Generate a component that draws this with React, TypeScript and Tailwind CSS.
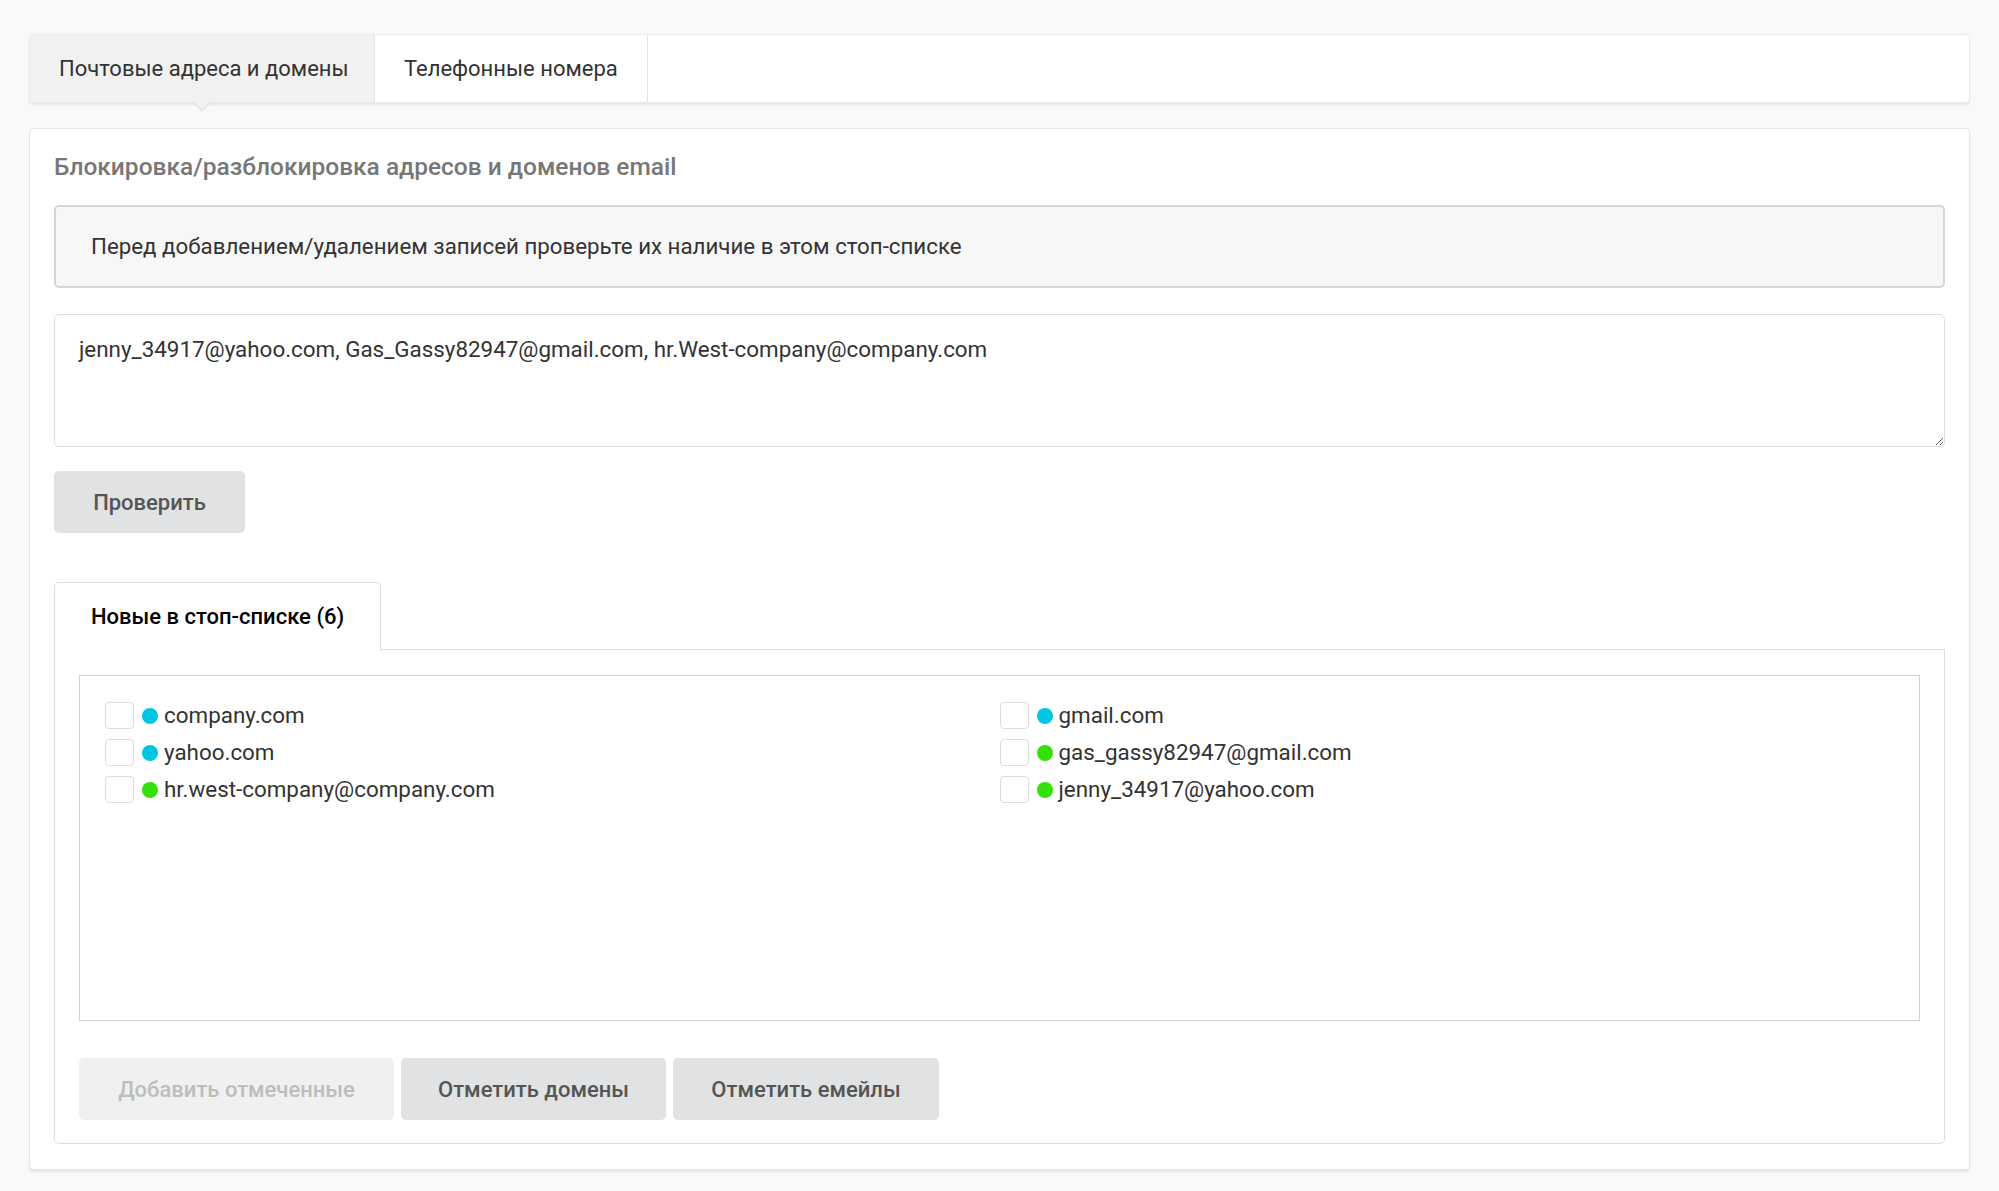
import { useState } from 'react';

type Item = { label: string; kind: 'domain' | 'email' };

const left: Item[] = [
  { label: 'company.com', kind: 'domain' },
  { label: 'yahoo.com', kind: 'domain' },
  { label: 'hr.west-company@company.com', kind: 'email' },
];

const right: Item[] = [
  { label: 'gmail.com', kind: 'domain' },
  { label: 'gas_gassy82947@gmail.com', kind: 'email' },
  { label: 'jenny_34917@yahoo.com', kind: 'email' },
];

const Row = ({ item }: { item: Item }) => (
  <label className="flex items-center h-[37px]">
    <span className="w-[29px] h-[27px] border border-[#dcdcdc] rounded-[4px] bg-white" />
    <span
      className={
        item.kind === 'domain'
          ? 'ml-[8px] w-[16px] h-[16px] rounded-full bg-[#00c6e4]'
          : 'ml-[8px] w-[16px] h-[16px] rounded-full bg-[#33e00a]'
      }
    />
    <span className="ml-[6px] text-[#333]">{item.label}</span>
  </label>
);

export default function App() {
  const [emails, setEmails] = useState(
    'jenny_34917@yahoo.com, Gas_Gassy82947@gmail.com, hr.West-company@company.com'
  );

  return (
    <div
      className="min-h-[1191px] bg-[#f9f9f9] px-[29px] pt-[34px] text-[22px] text-[#333]"
      style={{ fontFamily: 'Roboto, "Noto Sans", sans-serif' }}
    >
      {/* top tabs */}
      <div className="flex h-[69px] bg-white rounded-[4px] border border-[#ebebeb] shadow-[0_2px_2px_rgba(0,0,0,0.08)]">
        <div className="relative flex items-center w-[345px] bg-[#f1f1f1] rounded-l-[4px] border-r border-[#e4e4e4] pl-[29px]">
          Почтовые адреса и домены
          <span className="absolute left-[166px] -bottom-[7px] w-[12px] h-[12px] rotate-45 bg-[#f1f1f1] border-r border-b border-[#e0e0e0]" />
        </div>
        <div className="flex items-center w-[273px] border-r border-[#e4e4e4] pl-[29px]">Телефонные номера</div>
      </div>

      {/* main card */}
      <div className="mt-[25px] bg-white rounded-[4px] border border-[#e6e6e6] shadow-[0_2px_2px_rgba(0,0,0,0.08)] px-[24px] pt-[22px] pb-[25px]">
        <h2 className="text-[#777] text-[24.5px] font-medium leading-[32px]">Блокировка/разблокировка адресов и доменов email</h2>

        <div className="mt-[22px] h-[83px] flex items-center bg-[#f7f7f7] border-2 border-[#d5d5d5] rounded-[5px] pl-[35px] text-[22.3px]">
          Перед добавлением/удалением записей проверьте их наличие в этом стоп-списке
        </div>

        <textarea
          value={emails}
          onChange={(e) => setEmails(e.target.value)}
          className="mt-[26px] block w-full h-[133px] border border-[#dedede] rounded-[5px] px-[24px] pt-[18px] outline-none resize-y text-[#333] text-[22.4px]"
        />

        <button className="mt-[24px] h-[62px] w-[191px] rounded-[5px] bg-[#e1e2e4] text-[#555] font-medium">Проверить</button>

        {/* result tabs */}
        <div className="mt-[49px] flex">
          <div className="h-[68px] w-[327px] flex items-center pl-[36px] border border-b-0 border-[#dedede] rounded-t-[5px] font-medium text-black">
            Новые в стоп-списке (6)
          </div>
          <div className="flex-1 border-b border-[#dedede]" />
        </div>
        <div className="border border-t-0 border-[#dedede] rounded-b-[5px] px-[24px] pt-[25px] pb-[23px]">
          <div className="h-[346px] border border-[#d0d0d0] px-[25px] pt-[21px] grid grid-cols-2 content-start text-[22.4px]">
            <div>
              {left.map((it) => (
                <Row key={it.label} item={it} />
              ))}
            </div>
            <div>
              {right.map((it) => (
                <Row key={it.label} item={it} />
              ))}
            </div>
          </div>

          <div className="mt-[37px] flex gap-[7px]">
            <button className="h-[62px] w-[315px] rounded-[5px] bg-[#f0f0f0] text-[#bdbdbd] font-medium">Добавить отмеченные</button>
            <button className="h-[62px] w-[265px] rounded-[5px] bg-[#e1e2e4] text-[#555] font-medium">Отметить домены</button>
            <button className="h-[62px] w-[266px] rounded-[5px] bg-[#e1e2e4] text-[#555] font-medium">Отметить емейлы</button>
          </div>
        </div>
      </div>
    </div>
  );
}
